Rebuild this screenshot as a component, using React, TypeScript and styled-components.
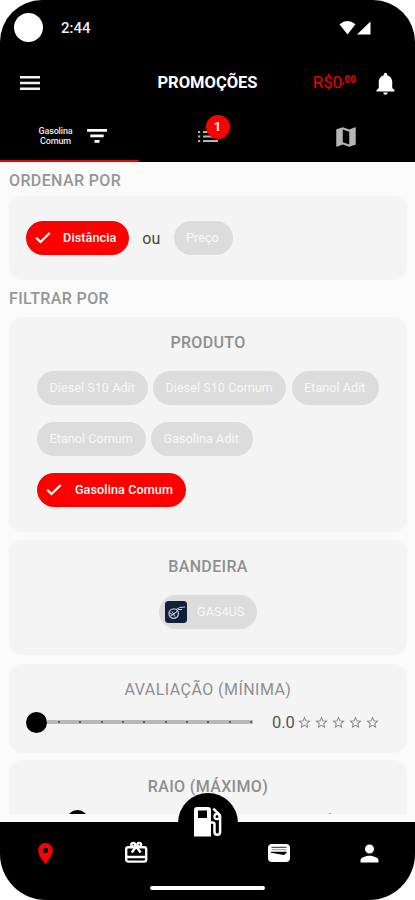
import React from "react";
import styled, { createGlobalStyle } from "styled-components";
import {
  MdNotifications,
  MdMap,
  MdLocationOn,
  MdPerson,
  MdStarBorder,
} from "react-icons/md";

const GlobalStyle = createGlobalStyle`
  * { box-sizing: border-box; }
  body { margin: 0; background: #fff; font-family: Roboto, "Liberation Sans", sans-serif; }
  svg { display: block; flex: none; }
`;

const Screen = styled.div`
  width: 415px;
  height: 900px;
  overflow: hidden;
  display: flex;
  flex-direction: column;
  background: #fafafa;
  border-radius: 42px 42px 46px 46px;
`;

const Header = styled.header`
  flex: none;
  height: 162px;
  background: #000;
  color: #fff;
`;

const StatusBar = styled.div`
  height: 55px;
  display: flex;
  align-items: center;
  padding: 0 43px 0 14px;
`;

const Camera = styled.div`
  width: 29px;
  height: 29px;
  border-radius: 50%;
  background: #fff;
`;

const Clock = styled.span`
  margin-left: 18px;
  padding-top: 1px;
  flex: 1;
  font-size: 15px;
  font-weight: 500;
  color: #eee;
  line-height: 20px;
`;

const AppBar = styled.div`
  height: 55px;
  display: grid;
  grid-template-columns: 138px 139px 90px 1fr;
  align-items: center;
`;

const MenuButton = styled.div`
  padding-left: 20px;
`;

const Title = styled.h1`
  margin: 0;
  text-align: center;
  font-size: 16.5px;
  font-weight: 700;
  letter-spacing: 0;
  line-height: 20px;
  white-space: nowrap;
`;

const Balance = styled.div`
  display: flex;
  justify-content: flex-end;
  padding: 0 11px 1px 0;
  color: #f00000;
  font-size: 17px;
  line-height: 20px;
  letter-spacing: -0.1px;
`;

const Cents = styled.span`
  font-size: 10px;
  font-weight: 700;
  line-height: 16px;
  letter-spacing: 0;
`;

const BellButton = styled.div`
  padding: 1px 0 0 5px;
`;

const Tabs = styled.div`
  height: 52px;
  display: grid;
  grid-template-columns: 139px 138px 138px;
`;

const Tab = styled.div<{ $active?: boolean }>`
  position: relative;
  display: flex;
  align-items: center;
  justify-content: center;
  gap: 13px;
  padding: ${(p) => (p.$active ? "2px 0 0 5px" : "3px 0 0 0")};
  color: ${(p) => (p.$active ? "#fff" : "#b5b5b5")};
  border-bottom: 2px solid ${(p) => (p.$active ? "#d90a0a" : "#000")};
`;

const TabLabel = styled.span`
  font-size: 9px;
  font-weight: 500;
  line-height: 10.5px;
  letter-spacing: -0.15px;
  color: #e8e8e8;
  text-align: center;
  width: 36px;
`;

const Badge = styled.span`
  position: absolute;
  left: 66.5px;
  top: 5px;
  width: 24px;
  height: 24px;
  border-radius: 50%;
  background: #f00;
  color: #fff;
  font-size: 13px;
  font-weight: 700;
  line-height: 24px;
  text-align: center;
`;

const Content = styled.main`
  height: 652px;
  flex: none;
  overflow: hidden;
  padding: 9px 8px 0 9px;
`;

const SectionTitle = styled.h2<{ $gap: number }>`
  margin: 0 0 ${(p) => p.$gap}px;
  color: #969696;
  font-size: 16px;
  font-weight: 500;
  line-height: 20px;
  letter-spacing: 0.38px;
`;

const Card = styled.section<{ $height: number; $gap: number }>`
  height: ${(p) => p.$height}px;
  margin-bottom: ${(p) => p.$gap}px;
  background: #f4f4f4;
  border-radius: 14px;
`;

const CardTitle = styled.h3<{ $top?: number; $spacing?: number; $weight?: number }>`
  margin: 0;
  padding-top: ${(p) => p.$top ?? 16}px;
  color: #8f8f8f;
  font-size: 16px;
  font-weight: ${(p) => p.$weight ?? 500};
  line-height: 20px;
  letter-spacing: ${(p) => p.$spacing ?? 0.35}px;
  text-align: center;
`;

const SortRow = styled.div`
  height: 84px;
  display: flex;
  align-items: center;
  padding-left: 17px;
`;

const Or = styled.span`
  width: 44.5px;
  text-align: center;
  font-size: 16px;
  color: #444;
`;

const ChipGrid = styled.div`
  display: flex;
  flex-direction: column;
  gap: 17px;
  padding: 18px 0 0 28px;
`;

const ChipRow = styled.div<{ $center?: boolean }>`
  display: flex;
  gap: 5.5px;
  justify-content: ${(p) => (p.$center ? "center" : "flex-start")};
  padding-top: ${(p) => (p.$center ? 18 : 0)}px;
`;

const ChipBox = styled.div<{ $width: number; $selected?: boolean }>`
  width: ${(p) => p.$width}px;
  height: 34px;
  flex: none;
  display: flex;
  align-items: center;
  padding: 0 ${(p) => (p.$selected ? 12.5 : 0)}px 0 ${(p) => (p.$selected ? 8 : 12.5)}px;
  justify-content: ${(p) => (p.$selected ? "space-between" : "flex-start")};
  border-radius: 17px;
  background: ${(p) => (p.$selected ? "#ff0000" : "#dcdcdc")};
  color: ${(p) => (p.$selected ? "#fff" : "#f8f8f8")};
  font-size: 12.6px;
  font-weight: ${(p) => (p.$selected ? 500 : 400)};
  letter-spacing: ${(p) => (p.$selected ? 0.1 : 0.05)}px;
  line-height: 16px;
  white-space: nowrap;
`;

const BrandChip = styled(ChipBox)`
  gap: 10px;
  padding-left: 6px;
`;

const RatingRow = styled.div`
  display: flex;
  align-items: center;
  height: 24px;
  margin-top: 10px;
  padding-left: 17px;
`;

const SliderBar = styled.div`
  width: 227px;
  display: flex;
  align-items: center;
`;

const Thumb = styled.div`
  width: 21px;
  height: 21px;
  border-radius: 50%;
  background: #000;
`;

const Track = styled.div`
  flex: 1;
  height: 4px;
  display: flex;
  align-items: center;
  justify-content: space-between;
  padding: 0 1px 0 11px;
  background: #b9b9b9;
`;

const Tick = styled.i`
  width: 2px;
  height: 2px;
  border-radius: 50%;
  background: #444;
`;

const Score = styled.span`
  margin-left: 19px;
  width: 25px;
  color: #555;
  font-size: 16.5px;
`;

const Stars = styled.div`
  display: flex;
  gap: 2px;
  color: #8a8a8a;
`;

const RadiusRow = styled.div`
  display: flex;
  align-items: center;
  justify-content: space-between;
  padding: 13px 76px 0 58px;
`;

const RadiusMark = styled.i`
  width: 2px;
  height: 1px;
  margin-bottom: 15px;
  background: #aaa;
`;

const BottomBar = styled.nav`
  position: relative;
  flex: none;
  height: 78px;
  margin-top: 8px;
  background: #000;
  color: #fff;
  display: flex;
  flex-direction: column;
  align-items: center;
`;

const NavItems = styled.div`
  width: 415px;
  height: 62px;
  display: grid;
  grid-template-columns: 91px 90px 53px 90px 91px;
  align-items: center;
  justify-items: center;
`;

const NavItem = styled.div<{ $active?: boolean }>`
  color: ${(p) => (p.$active ? "#ff0000" : "#fff")};
`;

const FuelButton = styled.div`
  position: absolute;
  left: 178px;
  top: -29px;
  width: 60px;
  height: 60px;
  border-radius: 50%;
  background: #000;
  display: flex;
  justify-content: center;
  padding-top: 14px;
`;

const HomeIndicator = styled.div`
  width: 115px;
  height: 4px;
  margin-top: 2px;
  border-radius: 2px;
  background: #fff;
`;

const MenuIcon = () => (
  <svg width="20" height="14" viewBox="0 0 20 14" fill="#f2f2f2">
    <path d="M0 0h20v2.5H0zM0 5.7h20v2.5H0zM0 11.4h20v2.5H0z" />
  </svg>
);

const FilterIcon = () => (
  <svg width="20" height="14" viewBox="0 0 20 14" fill="currentColor">
    <path d="M0 0h20v2.8H0zM3.3 5.5h13.4v2.8H3.3zM7.5 11h5v2.8h-5z" />
  </svg>
);

const FuelIcon = () => (
  <svg width="28" height="30" viewBox="0 0 28 30" fill="none">
    <path
      fillRule="evenodd"
      fill="currentColor"
      d="M3 0h11a3 3 0 0 1 3 3v26.5H0V3a3 3 0 0 1 3-3ZM4 3.5v7.5h9V3.5Z"
    />
    <path
      d="M17 15.5h1.5a2 2 0 0 1 2 2V25a2.8 2.8 0 0 0 5.6 0V9.5a3 3 0 0 0-.9-2.1L19.3 1.7"
      stroke="currentColor"
      strokeWidth="2.5"
    />
    <circle cx="23" cy="9.5" r="2.6" stroke="currentColor" strokeWidth="2.2" />
  </svg>
);

const CheckIcon = () => (
  <svg width="18" height="18" viewBox="0 0 18 18" fill="none" stroke="currentColor" strokeWidth="2.3">
    <path d="M2.2 8.8 6.5 13 15.7 4" />
  </svg>
);

function Chip({ label, width, selected }: { label: string; width: number; selected?: boolean }) {
  return (
    <ChipBox $width={width} $selected={selected}>
      {selected && <CheckIcon />}
      {label}
    </ChipBox>
  );
}

const SignalIcons = () => (
  <svg width="33" height="16" viewBox="0 0 33 16" fill="#fff">
    <path d="M8.5 14.5 0.5 4.2Q8.5-2.2 16.5 4.2Z" />
    <path d="M18 14.5 31.5 1.5V14.5Z" />
  </svg>
);

const ListIcon = () => (
  <svg width="20" height="14" viewBox="0 0 20 14" fill="currentColor">
    <path d="M0 1h2.2v2H0zM5 1h15v2H5zM0 5.5h2.2v2H0zM5 5.5h15v2H5zM0 10h2.2v2H0zM5 10h15v2H5z" />
  </svg>
);

const BrandLogo = () => (
  <svg width="22" height="22" viewBox="0 0 22 22" fill="none">
    <rect width="22" height="22" rx="3.5" fill="#10203a" />
    <circle cx="8.7" cy="12.6" r="4.7" stroke="#b8c2cc" strokeWidth="1.4" />
    <path d="M4.5 11.5 8 14.2 13 9M5.5 15 12 10.5M7 10.5l3 5M11 8.5Q14 5.8 20 6M13 8.5h4" stroke="#c7d0d8" strokeWidth="1" />
  </svg>
);

const GiftIcon = () => (
  <svg width="24" height="24" viewBox="0 0 24 24" fill="none" stroke="currentColor" strokeWidth="2.4">
    <rect x="2.2" y="6.2" width="20" height="14.4" rx="2" />
    <path d="M2 16h20" />
    <circle cx="9.2" cy="3.8" r="1.9" />
    <circle cx="15.2" cy="3.8" r="1.9" />
    <path d="M12.2 5.5 7.8 11.5M12.2 5.5l4.4 6" />
  </svg>
);

const WalletIcon = () => (
  <svg width="24" height="20" viewBox="0 0 24 20">
    <rect x="1" y="1" width="22" height="18" rx="4" fill="#fff" />
    <path d="M4.5 3.8h15v1.2h-15z" fill="#555" />
    <path d="M4.5 6h15v1.2h-15z" fill="#aaa" />
    <path d="M4 8.7h15.5v1L17 12 4 9.7z" fill="#000" />
  </svg>
);

export default function App() {
  return (
    <>
      <GlobalStyle />
      <Screen>
        <Header>
          <StatusBar>
            <Camera />
            <Clock>2:44</Clock>
            <SignalIcons />
          </StatusBar>
          <AppBar>
            <MenuButton><MenuIcon /></MenuButton>
            <Title>PROMOÇÕES</Title>
            <Balance>R$0<Cents>,00</Cents></Balance>
            <BellButton><MdNotifications size={27} /></BellButton>
          </AppBar>
          <Tabs>
            <Tab $active>
              <TabLabel>Gasolina Comum</TabLabel>
              <FilterIcon />
            </Tab>
            <Tab>
              <ListIcon />
              <Badge>1</Badge>
            </Tab>
            <Tab><MdMap size={26} /></Tab>
          </Tabs>
        </Header>
        <Content>
          <SectionTitle $gap={5}>ORDENAR POR</SectionTitle>
          <Card $height={84} $gap={9}>
            <SortRow>
              <Chip label="Distância" width={103} selected />
              <Or>ou</Or>
              <Chip label="Preço" width={59} />
            </SortRow>
          </Card>
          <SectionTitle $gap={8}>FILTRAR POR</SectionTitle>
          <Card $height={215} $gap={8}>
            <CardTitle>PRODUTO</CardTitle>
            <ChipGrid>
              <ChipRow>
                <Chip label="Diesel S10 Adit" width={110.5} />
                <Chip label="Diesel S10 Comum" width={133} />
                <Chip label="Etanol Adit" width={87.5} />
              </ChipRow>
              <ChipRow>
                <Chip label="Etanol Comum" width={108.5} />
                <Chip label="Gasolina Adit" width={101.5} />
              </ChipRow>
              <ChipRow>
                <Chip label="Gasolina Comum" width={148.5} selected />
              </ChipRow>
            </ChipGrid>
          </Card>
          <Card $height={115} $gap={9}>
            <CardTitle $top={17}>BANDEIRA</CardTitle>
            <ChipRow $center>
              <BrandChip $width={98}>
                <BrandLogo />
                GAS4US
              </BrandChip>
            </ChipRow>
          </Card>
          <Card $height={89} $gap={7}>
            <CardTitle $weight={400} $spacing={0.45}>AVALIAÇÃO (MÍNIMA)</CardTitle>
            <RatingRow>
              <SliderBar>
                <Thumb />
                <Track>
                  {Array.from({ length: 10 }, (_, i) => <Tick key={i} />)}
                </Track>
              </SliderBar>
              <Score>0.0</Score>
              <Stars>
                {Array.from({ length: 5 }, (_, i) => <MdStarBorder key={i} size={15} />)}
              </Stars>
            </RatingRow>
          </Card>
          <Card $height={89} $gap={0}>
            <CardTitle $top={17}>RAIO (MÁXIMO)</CardTitle>
            <RadiusRow>
              <Thumb />
              <RadiusMark />
            </RadiusRow>
          </Card>
        </Content>
        <BottomBar>
          <FuelButton><FuelIcon /></FuelButton>
          <NavItems>
            <NavItem $active><MdLocationOn size={25} /></NavItem>
            <NavItem><GiftIcon /></NavItem>
            <span />
            <NavItem><WalletIcon /></NavItem>
            <NavItem><MdPerson size={27} /></NavItem>
          </NavItems>
          <HomeIndicator />
        </BottomBar>
      </Screen>
    </>
  );
}
